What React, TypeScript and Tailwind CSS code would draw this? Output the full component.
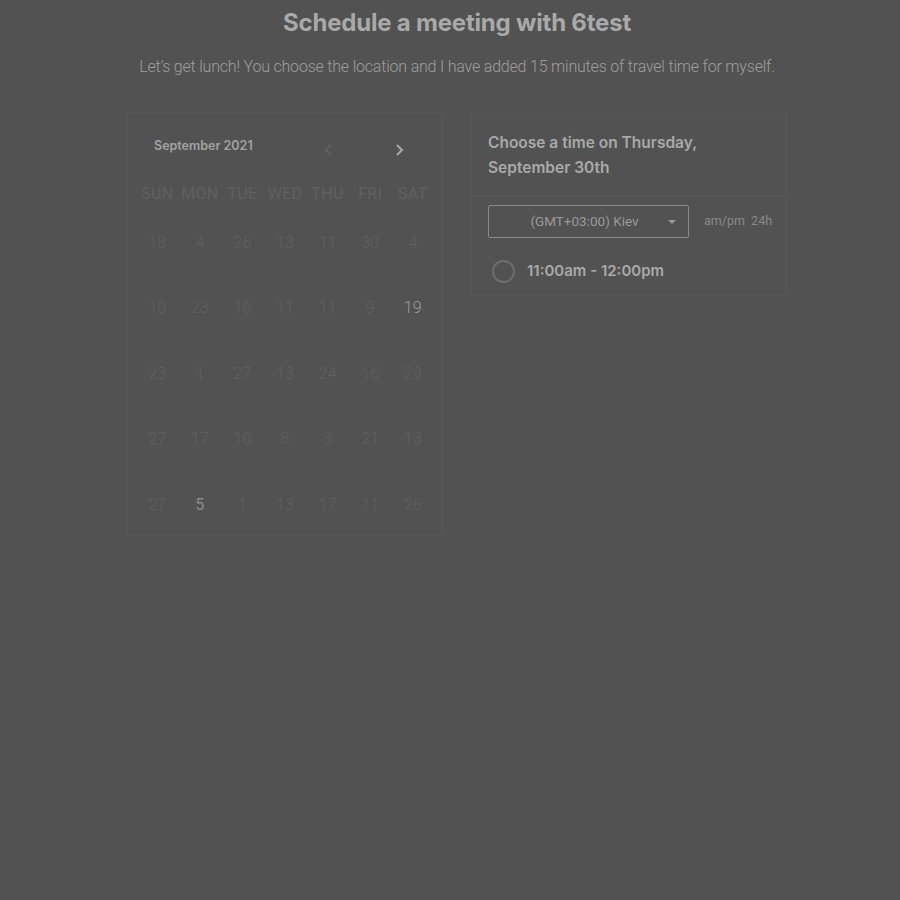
import React from "react";

const rows: { n: string; b?: string }[][] = [
  [{ n: "18" }, { n: "4" }, { n: "26" }, { n: "13" }, { n: "11" }, { n: "30" }, { n: "4" }],
  [{ n: "10" }, { n: "23" }, { n: "16" }, { n: "11" }, { n: "11" }, { n: "9" }, { n: "19", b: "text-[#9c9c9c]" }],
  [{ n: "23" }, { n: "1" }, { n: "27" }, { n: "13" }, { n: "24" }, { n: "16" }, { n: "29" }],
  [{ n: "27" }, { n: "17" }, { n: "10" }, { n: "8" }, { n: "3" }, { n: "21" }, { n: "13" }],
  [{ n: "27" }, { n: "5", b: "text-[#8c8c8c] font-normal" }, { n: "1" }, { n: "13" }, { n: "17" }, { n: "11" }, { n: "26" }],
];

const days = ["SUN", "MON", "TUE", "WED", "THU", "FRI", "SAT"];

export default function App() {
  return (
    <div className="w-[900px] h-[900px] bg-[#525252] overflow-hidden font-['Roboto',sans-serif]">
      <div className="flex flex-col items-center pt-[7px] pl-[14px]">
        <h1 className="text-[24px] leading-[32px] font-bold text-[#a9a9a9] font-['Inter',sans-serif] tracking-[-0.2px]">
          Schedule a meeting with 6test
        </h1>
        <p className="mt-[16px] text-[16px] leading-[24px] font-light text-[#9e9e9e] tracking-[-0.2px]">
          Let’s get lunch! You choose the location and I have added 15 minutes of travel time for myself.
        </p>
      </div>
      <div className="flex items-start gap-[28px] ml-[127px] mt-[33px]">
        <div className="w-[316px] h-[424px] border border-[#575757] flex flex-col">
          <div className="flex items-center h-[24px] mt-[22px] pl-[26px]">
            <span className="text-[12.5px] font-semibold text-[#a3a3a3] font-['Inter',sans-serif] w-[163px]">
              September 2021
            </span>
            <div className="w-[24px] flex justify-center mt-[8px]">
              <svg width="10" height="14" viewBox="0 0 10 14" fill="none" stroke="#606060" strokeWidth="2">
                <path d="M7 2L2 7l5 5" />
              </svg>
            </div>
            <div className="w-[46px]" />
            <div className="w-[24px] flex justify-center mt-[8px]">
              <svg width="10" height="14" viewBox="0 0 10 14" fill="none" stroke="#a8a8a8" strokeWidth="2">
                <path d="M3 2l5 5-5 5" />
              </svg>
            </div>
          </div>
          <div className="grid grid-cols-7 px-[8px] mt-[25px] h-[24px] items-center">
            {days.map((d) => (
              <div key={d} className="text-center text-[16px] text-[#606060] font-normal tracking-[0.3px]">
                {d}
              </div>
            ))}
          </div>
          <div className="px-[8px] mt-[4px]">
            {rows.map((r, i) => (
              <div key={i} className="grid grid-cols-7 h-[65.5px] items-center">
                {r.map((c, j) => (
                  <div key={j} className={`text-center text-[16px] font-light ${c.b ? c.b : "text-[#606060]"}`}>
                    {c.n}
                  </div>
                ))}
              </div>
            ))}
          </div>
        </div>
        <div className="w-[316px] h-[183px] border border-[#575757] mt-[1px] flex flex-col">
          <div className="px-[16px] pt-[16px] pb-[15px] border-b border-[#575757]">
            <div className="text-[15.5px] leading-[25px] font-semibold text-[#a9a9a9] font-['Inter',sans-serif]">
              Choose a time on Thursday,
              <br />
              September 30th
            </div>
          </div>
          <div className="flex items-center pl-[16px] mt-[9px]">
            <div className="w-[201px] h-[33px] border border-[#8a8a8a] rounded-[2px] flex items-center">
              <span className="flex-1 text-center pl-[12px] text-[13.5px] text-[#9a9a9a]">(GMT+03:00) Kiev</span>
              <span className="w-0 h-0 border-l-[4px] border-r-[4px] border-t-[4px] border-l-transparent border-r-transparent border-t-[#9a9a9a] mr-[12px]" />
            </div>
            <span className="ml-[15px] text-[12.5px] text-[#8a8a8a] whitespace-pre">am/pm  24h</span>
          </div>
          <div className="flex items-center mt-[22px] pl-[20px]">
            <span className="w-[23px] h-[23px] rounded-full border-2 border-[#6e6e6e]" />
            <span className="ml-[12px] text-[15px] font-semibold text-[#a9a9a9] font-['Inter',sans-serif]">
              11:00am - 12:00pm
            </span>
          </div>
        </div>
      </div>
    </div>
  );
}
